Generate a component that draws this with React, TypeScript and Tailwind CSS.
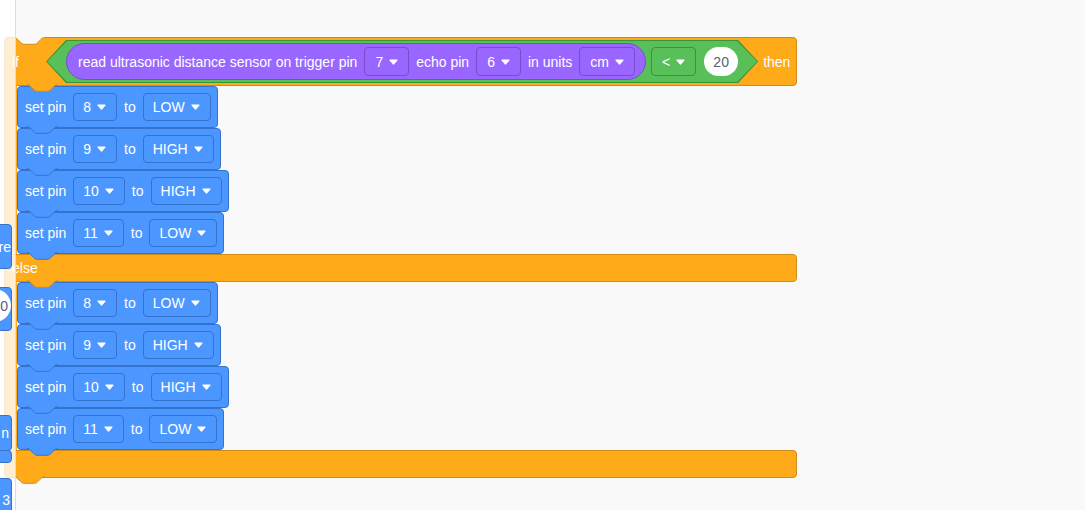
const ORANGE = 'bg-[#ffab19]'

const NOTCH =
  'c1.7 0 2.55 0.85 3.4 1.7 l3.4 3.4 c0.85 0.85 1.7 1.7 3.4 1.7 h10.2 c1.7 0 2.55 -0.85 3.4 -1.7 l3.4 -3.4 c0.85 -0.85 1.7 -1.7 3.4 -1.7'

// tab hanging under a block, drawn over the block that follows
function Bump({ fill, stroke, left }: { fill: string; stroke: string; left: number }) {
  return (
    <svg
      width="32"
      height="9"
      viewBox="0 0 32 9"
      className="absolute top-[calc(100%-1px)] z-10"
      style={{ left }}
    >
      <path d={`M0 0 L0 0.5 ${NOTCH} L30.6 0 Z`} fill={fill} />
      <path d={`M0 0.5 ${NOTCH}`} fill="none" stroke={stroke} strokeWidth="1" />
    </svg>
  )
}

function Arrow() {
  return (
    <svg width="9" height="6" viewBox="0 0 9 6" className="shrink-0">
      <path
        d="M1 1 H8 L4.5 5 Z"
        fill="#fff"
        stroke="#fff"
        strokeWidth="1.2"
        strokeLinejoin="round"
      />
    </svg>
  )
}

function Dropdown({ label, tone }: { label: string; tone: 'blue' | 'purple' | 'green' }) {
  const cls =
    tone === 'blue'
      ? 'h-[28px] pl-[9px] pr-[10px] bg-[#4c97ff] border-[#3373cc]'
      : tone === 'purple'
        ? 'h-[29px] pl-[10px] pr-[10px] bg-[#9966ff] border-[#774dcb]'
        : 'h-[29px] pl-[10px] pr-[10px] bg-[#59c059] border-[#389438]'
  return (
    <div className={`flex items-center gap-[6px] rounded-[4px] border ${cls}`}>
      <span className="leading-none">{label}</span>
      <Arrow />
    </div>
  )
}

function SetPin({ pin, level }: { pin: string; level: string }) {
  return (
    <div className="relative h-[42px] flex items-center gap-[7px] pl-[7px] pr-[6px] bg-[#4c97ff] border border-[#3373cc] rounded-[4px]">
      <span className="leading-none">set pin</span>
      <Dropdown label={pin} tone="blue" />
      <span className="leading-none">to</span>
      <Dropdown label={level} tone="blue" />
      <Bump fill="#4c97ff" stroke="#3373cc" left={9} />
    </div>
  )
}

const rowsIf = [
  { pin: '8', level: 'LOW' },
  { pin: '9', level: 'HIGH' },
  { pin: '10', level: 'HIGH' },
  { pin: '11', level: 'LOW' },
]

function Stack() {
  return (
    <div className="flex">
      <div className={`relative w-[13px] -my-px ${ORANGE} border-l border-[#cf8b17]`} />
      <div className="flex flex-col items-start">
        {rowsIf.map((r) => (
          <SetPin key={r.pin} pin={r.pin} level={r.level} />
        ))}
      </div>
    </div>
  )
}

const HEX =
  '[clip-path:polygon(20px_0,calc(100%_-_20px)_0,100%_50%,calc(100%_-_20px)_100%,20px_100%,0_50%)]'

function Condition() {
  return (
    <div className="relative ml-[27px] h-[43px] flex items-center gap-[5px] px-[20px]">
      <div className={`absolute inset-0 bg-[#389438] ${HEX}`} />
      <div className={`absolute inset-[1px] bg-[#59c059] ${HEX}`} />
      <div className="relative h-[37px] flex items-center gap-[7px] pl-[11px] pr-[10px] bg-[#9966ff] border border-[#774dcb] rounded-full">
        <span className="leading-none whitespace-nowrap">read ultrasonic distance sensor on trigger pin</span>
        <Dropdown label="7" tone="purple" />
        <span className="leading-none whitespace-nowrap">echo pin</span>
        <Dropdown label="6" tone="purple" />
        <span className="leading-none whitespace-nowrap">in units</span>
        <Dropdown label="cm" tone="purple" />
      </div>
      <div className="relative">
        <Dropdown label="<" tone="green" />
      </div>
      <div className="relative ml-[3px] h-[29px] w-[34px] rounded-full bg-white flex items-center justify-center text-[#575e75]">
        <span className="leading-none">20</span>
      </div>
    </div>
  )
}

function IfElseBlock() {
  return (
    <div className="absolute left-[4px] top-[37px] w-[793px] flex flex-col">
      <div className={`relative h-[49px] flex items-center pl-[7px] ${ORANGE} border border-[#cf8b17] rounded-[4px] rounded-bl-none`}>
        <svg width="32" height="9" viewBox="0 0 32 9" className="absolute -top-px left-[9px]">
          <path d={`M0 0 L0 0.5 ${NOTCH} L30.6 0 Z`} fill="#f9f9f9" />
          <path d={`M0 0.5 ${NOTCH}`} fill="none" stroke="#cf8b17" strokeWidth="1" />
        </svg>
        <span className="leading-none">if</span>
        <Condition />
        <span className="ml-[5px] leading-none">then</span>
        <Bump fill="#ffab19" stroke="#cf8b17" left={22} />
      </div>
      <Stack />
      <div className={`relative h-[28px] flex items-center pl-[7px] ${ORANGE} border border-[#cf8b17] rounded-r-[4px]`}>
        <span className="leading-none">else</span>
        <Bump fill="#ffab19" stroke="#cf8b17" left={22} />
      </div>
      <Stack />
      <div className={`relative h-[28px] ${ORANGE} border border-[#cf8b17] rounded-[4px] rounded-tl-none`}>
        <Bump fill="#ffab19" stroke="#cf8b17" left={9} />
      </div>
    </div>
  )
}

function Flyout() {
  return (
    <div className="absolute left-0 top-0 z-40 h-full w-[16px] overflow-hidden bg-white/80 border-r border-[#dddddd]">
      <div className="absolute left-[-60px] top-[224px] w-[72px] h-[45px] flex items-center justify-end bg-[#4c97ff] border border-[#3373cc] rounded-[4px]">
        <span className="leading-none">re</span>
      </div>
      <div className="absolute left-[-50px] top-[287px] w-[62px] h-[44px] bg-[#4c97ff] border border-[#3373cc] rounded-[4px]">
        <div className="absolute right-0 top-[1px] h-[33px] w-[44px] rounded-full bg-white flex items-center justify-end pr-[3px] text-[#575e75]">
          <span className="leading-none">0</span>
        </div>
      </div>
      <div className="absolute left-[-60px] top-[415px] w-[72px] h-[36px] flex items-center justify-end pr-[2px] bg-[#4c97ff] border border-[#3373cc] rounded-[4px]">
        <span className="leading-none">n</span>
      </div>
      <div className="absolute left-[-60px] top-[450px] w-[72px] h-[13px] bg-[#4c97ff] border border-[#3373cc] rounded-[4px]" />
      <div className="absolute left-[-60px] top-[478px] w-[72px] h-[44px] flex items-center justify-end pr-[1px] bg-[#4c97ff] border border-[#3373cc] rounded-[4px]">
        <span className="leading-none">3</span>
      </div>
    </div>
  )
}

export default function App() {
  return (
    <div className="relative w-[1085px] h-[510px] overflow-hidden bg-[#f9f9f9] text-white text-[14px] font-['Liberation_Sans',Arial,sans-serif]">
      <IfElseBlock />
      <Flyout />
    </div>
  )
}
